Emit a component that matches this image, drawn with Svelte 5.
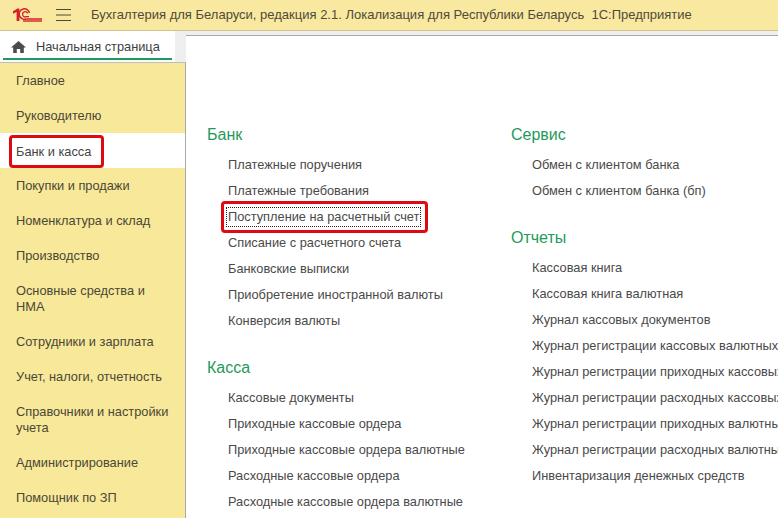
<script>
  const nav = [
    { label: 'Главное', h: 35 },
    { label: 'Руководителю', h: 35 },
    { label: 'Банк и касса', h: 35, active: true },
    { label: 'Покупки и продажи', h: 35 },
    { label: 'Номенклатура и склад', h: 35 },
    { label: 'Производство', h: 35 },
    { label: 'Основные средства и НМА', h: 51 },
    { label: 'Сотрудники и зарплата', h: 35 },
    { label: 'Учет, налоги, отчетность', h: 35 },
    { label: 'Справочники и настройки учета', h: 51 },
    { label: 'Администрирование', h: 35 },
    { label: 'Помощник по ЗП', h: 35 }
  ];
  const left = [
    { title: 'Банк', items: ['Платежные поручения', 'Платежные требования', 'Поступление на расчетный счет', 'Списание с расчетного счета', 'Банковские выписки', 'Приобретение иностранной валюты', 'Конверсия валюты'] },
    { title: 'Касса', items: ['Кассовые документы', 'Приходные кассовые ордера', 'Приходные кассовые ордера валютные', 'Расходные кассовые ордера', 'Расходные кассовые ордера валютные'] }
  ];
  const right = [
    { title: 'Сервис', items: ['Обмен с клиентом банка', 'Обмен с клиентом банка (бп)'] },
    { title: 'Отчеты', items: ['Кассовая книга', 'Кассовая книга валютная', 'Журнал кассовых документов', 'Журнал регистрации кассовых валютных', 'Журнал регистрации приходных кассовых', 'Журнал регистрации расходных кассовых', 'Журнал регистрации приходных валютных', 'Журнал регистрации расходных валютных', 'Инвентаризация денежных средств'] }
  ];
  const focused = 'Поступление на расчетный счет';
</script>

<div class="page">
  <header class="top">
    <svg class="logo" width="29" height="14" viewBox="0 0 29 14" aria-hidden="true">
      <path d="M0 3.2 L4.5 .6 H6.4 V13 H3.6 V4 L0 5.8 Z" fill="#d2232a"/>
      <path d="M16.5 5 A5.2 5.2 0 1 0 13 11 H29" fill="none" stroke="#d2232a" stroke-width="1.5"/>
      <path d="M14.6 5.4 A2.6 2.6 0 1 0 13 8.7 H16" fill="none" stroke="#d2232a" stroke-width="1.3"/>
      <path d="M10 13 H29" fill="none" stroke="#d2232a" stroke-width="1.4"/>
    </svg>
    <svg class="burger" width="15" height="12" viewBox="0 0 15 12" aria-hidden="true">
      <path d="M0 .5H15M0 6H15M0 11.5H15" stroke="#4a4a3a" stroke-width="1"/>
    </svg>
    <span class="title">Бухгалтерия для Беларуси, редакция 2.1. Локализация для Республики Беларусь  1С:Предприятие</span>
  </header>

  <div class="tabs">
    <div class="tab">
      <svg width="15" height="12" viewBox="0 0 15 12" aria-hidden="true">
        <path d="M7.5 0 L15 6.5 H12.8 V12 H9.2 V8 H5.8 V12 H2.2 V6.5 H0 Z" fill="#4b4b4b"/>
      </svg>
      <span>Начальная страница</span>
    </div>
  </div>

  <div class="body">
    <nav class="side">
      {#each nav as n}
        <div class="nav" class:active={n.active} style="height:{n.h}px">
          {#if n.active}<span class="mark nav-mark">{n.label}</span>{:else}<span>{n.label}</span>{/if}
        </div>
      {/each}
    </nav>
    <main class="content">
      <div class="col c1">
        {#each left as g}
          <section>
            <h2>{g.title}</h2>
            {#each g.items as it}
              <div class="link">
                {#if it === focused}<span class="mark link-mark"><span class="dots">{it}</span></span>{:else}{it}{/if}
              </div>
            {/each}
          </section>
        {/each}
      </div>
      <div class="col c2">
        {#each right as g}
          <section>
            <h2>{g.title}</h2>
            {#each g.items as it}<div class="link">{it}</div>{/each}
          </section>
        {/each}
      </div>
    </main>
  </div>
</div>

<style>
  :global(body) { margin: 0; }
  .page {
    width: 778px; height: 518px; overflow: hidden; display: flex; flex-direction: column;
    font: 12.8px/16px "Liberation Sans", Arial, sans-serif; color: #4a4a4a; background: #efefef;
  }
  .top {
    height: 30px; flex: none; display: flex; align-items: center; background: #f9e89f;
    border-bottom: 1px solid #cfc38f; white-space: pre;
  }
  .logo { margin-left: 13px; }
  .burger { margin-left: 14px; }
  .title { margin-left: 20px; color: #4f4a3a; font-size: 13px; }
  .tabs { height: 31px; flex: none; display: flex; }
  .tab {
    width: 175px; background: #fff; box-sizing: border-box; position: relative;
    display: flex; align-items: center; padding: 0 0 0 11px; gap: 10px; color: #3f3f3f; white-space: nowrap;
  }
  .tab::after { content: ''; position: absolute; left: 3px; right: 3px; bottom: 2px; height: 2px; background: #1d9a5e; }
  .body { flex: 1; display: flex; min-height: 0; }
  .side { width: 185px; flex: none; background: #f8e99a; border-right: 1px solid #a9a9a9; border-top: 1px solid #bdbdbd; box-sizing: content-box; }
  .nav { display: flex; align-items: center; padding: 1px 12px 0 16px; box-sizing: border-box; color: #4b4735; }
  .nav.active { background: #fff; color: #444; }
  .mark { outline: 3px solid #dd0a12; border-radius: 1px; display: inline-block; }
  .nav-mark { padding: 6px 10px 5px 4px; margin-left: -4px; white-space: nowrap; }
  .content { flex: 1; margin-top: -27px; background: #fff; border-top: 1px solid #a9a9a9; display: flex; min-width: 0; overflow: hidden; position: relative; padding-top: 89px; }
  .col { flex: none; }
  .c1 { width: 325px; padding-left: 21px; box-sizing: border-box; }
  .c2 { width: 400px; }
  section { margin-bottom: 24px; }
  h2 { margin: 0 0 7px; font-size: 16px; line-height: 20px; font-weight: 400; color: #1f9a5c; }
  .link { height: 26px; line-height: 26px; margin-left: 21px; white-space: nowrap; }
  .link-mark { height: 26px; padding: 0 4px 0 2px; margin-left: -4px; line-height: 20px; box-sizing: border-box; padding-top: 3px; }
  .dots { display: inline-block; height: 20px; padding: 0 2px; box-sizing: border-box; outline: 1px dotted #222; outline-offset: -1px; }
</style>
